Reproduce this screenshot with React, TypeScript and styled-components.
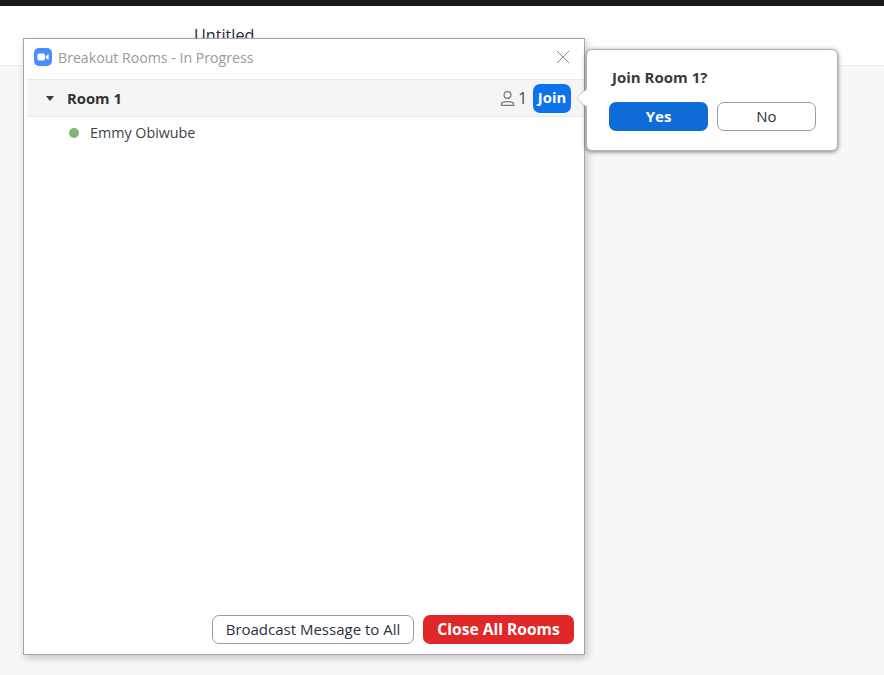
import styled, { createGlobalStyle } from "styled-components";

const GlobalStyle = createGlobalStyle`
  html, body {
    margin: 0;
    padding: 0;
    height: 100%;
    background: #f8f8f8;
    font-family: "Open Sans", "Noto Sans", "Liberation Sans", sans-serif;
    overflow: hidden;
  }
`;

const Page = styled.div`
  position: relative;
  width: 884px;
  height: 675px;
  background: #f8f8f8;
  overflow: hidden;
`;

const TopBar = styled.div`
  height: 6px;
  background: #1a1a1a;
`;

const DocHeader = styled.header`
  height: 60px;
  box-sizing: border-box;
  background: #fff;
  border-bottom: 1px solid #ececec;
  padding: 18px 0 0 194px;
`;

const DocTitle = styled.span`
  font-size: 16.2px;
  line-height: 22px;
  color: #1f2a44;
`;

const Window = styled.section`
  position: absolute;
  left: 23px;
  top: 38px;
  width: 562px;
  height: 617px;
  box-sizing: border-box;
  background: #fff;
  border: 1px solid #a6a6a6;
  box-shadow: 2px 3px 8px rgba(0, 0, 0, 0.22);
  display: flex;
  flex-direction: column;
`;

const TitleBar = styled.div`
  height: 40px;
  box-sizing: border-box;
  flex: none;
  display: flex;
  align-items: center;
  padding: 0 13px 4px 10px;
  gap: 6px;
`;

const WindowTitle = styled.span`
  flex: 1;
  font-size: 14.15px;
  color: #9a9a9a;
`;

const CloseIcon = styled.button`
  width: 16px;
  height: 16px;
  padding: 0;
  border: 0;
  background: none;
  display: flex;
`;

const RoomList = styled.div`
  flex: 1;
  padding: 0 0 0 3px;
`;

const RoomRow = styled.div`
  height: 38px;
  box-sizing: border-box;
  background: #f4f5f6;
  border-top: 1px solid #e8e8ea;
  border-bottom: 1px solid #e8e8ea;
  display: flex;
  align-items: center;
  padding: 0 13px 0 19px;
`;

const Caret = styled.span`
  width: 0;
  height: 0;
  border-left: 4px solid transparent;
  border-right: 4px solid transparent;
  border-top: 5px solid #3a3a3a;
  margin-right: 13px;
`;

const RoomName = styled.span`
  flex: 1;
  font-size: 14.8px;
  font-weight: 700;
  color: #333;
`;

const Count = styled.span`
  display: flex;
  align-items: center;
  gap: 3px;
  font-size: 15.5px;
  color: #444;
  margin-right: 6px;
`;

const JoinButton = styled.button`
  width: 38px;
  height: 29px;
  padding: 0 0 2px;
  border: 0;
  border-radius: 7px;
  background: #0e72ed;
  color: #fff;
  font: 700 14.8px "Open Sans", sans-serif;
`;

const Member = styled.div`
  height: 31px;
  display: flex;
  align-items: center;
  padding-left: 42px;
  gap: 11px;
  font-size: 14.3px;
  color: #3a3f4a;
`;

const Dot = styled.span`
  width: 10px;
  height: 10px;
  border-radius: 50%;
  background: #7db676;
`;

const Footer = styled.div`
  flex: none;
  display: flex;
  justify-content: flex-end;
  gap: 9px;
  padding: 0 10px 10px 0;
`;

const Button = styled.button<{ $variant: "outline" | "danger" | "primary"; $width: number; $size?: number }>`
  width: ${(p) => p.$width}px;
  height: 29px;
  box-sizing: border-box;
  padding: 0 0 2px;
  border-radius: 7px;
  border: ${(p) => (p.$variant === "outline" ? "1px solid #9c9c9c" : "0")};
  background: ${(p) =>
    p.$variant === "outline" ? "#fff" : p.$variant === "danger" ? "#e02828" : "#0e6bd8"};
  color: ${(p) => (p.$variant === "outline" ? "#2b3245" : "#fff")};
  font-family: "Open Sans", sans-serif;
  font-size: ${(p) => p.$size ?? 15}px;
  font-weight: ${(p) => (p.$variant === "outline" ? 400 : 700)};
`;

const Popup = styled.div`
  position: absolute;
  left: 586px;
  top: 49px;
  width: 252px;
  height: 102px;
  box-sizing: border-box;
  background: #fff;
  border: 1px solid #b4b4b4;
  border-radius: 6px;
  box-shadow: 0 1px 4px rgba(0, 0, 0, 0.5);
  padding: 17px 21px 0 22px;

  &::before {
    content: "";
    position: absolute;
    left: -7px;
    top: 42px;
    width: 12px;
    height: 12px;
    background: #fff;
    transform: rotate(45deg);
    box-shadow: -1px 1px 1px rgba(0, 0, 0, 0.12);
  }
`;

const PopupTitle = styled.div`
  position: relative;
  font-size: 15px;
  line-height: 20px;
  font-weight: 700;
  color: #3a3a3a;
  padding-left: 3px;
  margin-bottom: 15px;
`;

const PopupActions = styled.div`
  position: relative;
  display: flex;
  gap: 9px;
`;

const ZoomLogo = () => (
  <svg width="18" height="18" viewBox="0 0 18 18">
    <rect width="18" height="18" rx="5" fill="#4a8cff" />
    <rect x="3.4" y="5.6" width="7.6" height="6.8" rx="1.6" fill="#fff" />
    <path d="M11.6 8.2 14.6 6v6l-3-2.2z" fill="#fff" />
  </svg>
);

const PersonIcon = () => (
  <svg width="15" height="17" viewBox="0 0 15 17" fill="none" stroke="#777" strokeWidth="1.2">
    <circle cx="7.5" cy="5" r="3.4" />
    <path d="M1.4 15.4v-1.2c0-1.5 1.8-2.6 6.1-2.6s6.1 1.1 6.1 2.6v1.2z" strokeLinejoin="round" />
  </svg>
);

const App = () => {
  return (
    <Page>
      <GlobalStyle />
      <TopBar />
      <DocHeader>
        <DocTitle>Untitled</DocTitle>
      </DocHeader>
      <Window>
        <TitleBar>
          <ZoomLogo />
          <WindowTitle>Breakout Rooms - In Progress</WindowTitle>
          <CloseIcon aria-label="Close">
            <svg width="16" height="16" viewBox="0 0 16 16" stroke="#8a8a8a" strokeWidth="1">
              <path d="M2 2l12 12M14 2 2 14" />
            </svg>
          </CloseIcon>
        </TitleBar>
        <RoomList>
          <RoomRow>
            <Caret />
            <RoomName>Room 1</RoomName>
            <Count>
              <PersonIcon />1
            </Count>
            <JoinButton>Join</JoinButton>
          </RoomRow>
          <Member>
            <Dot />
            Emmy Obiwube
          </Member>
        </RoomList>
        <Footer>
          <Button $variant="outline" $width={202}>Broadcast Message to All</Button>
          <Button $variant="danger" $width={151} $size={15.6}>Close All Rooms</Button>
        </Footer>
      </Window>
      <Popup>
        <PopupTitle>Join Room 1?</PopupTitle>
        <PopupActions>
          <Button $variant="primary" $width={99}>Yes</Button>
          <Button $variant="outline" $width={99}>No</Button>
        </PopupActions>
      </Popup>
    </Page>
  );
};

export default App;
